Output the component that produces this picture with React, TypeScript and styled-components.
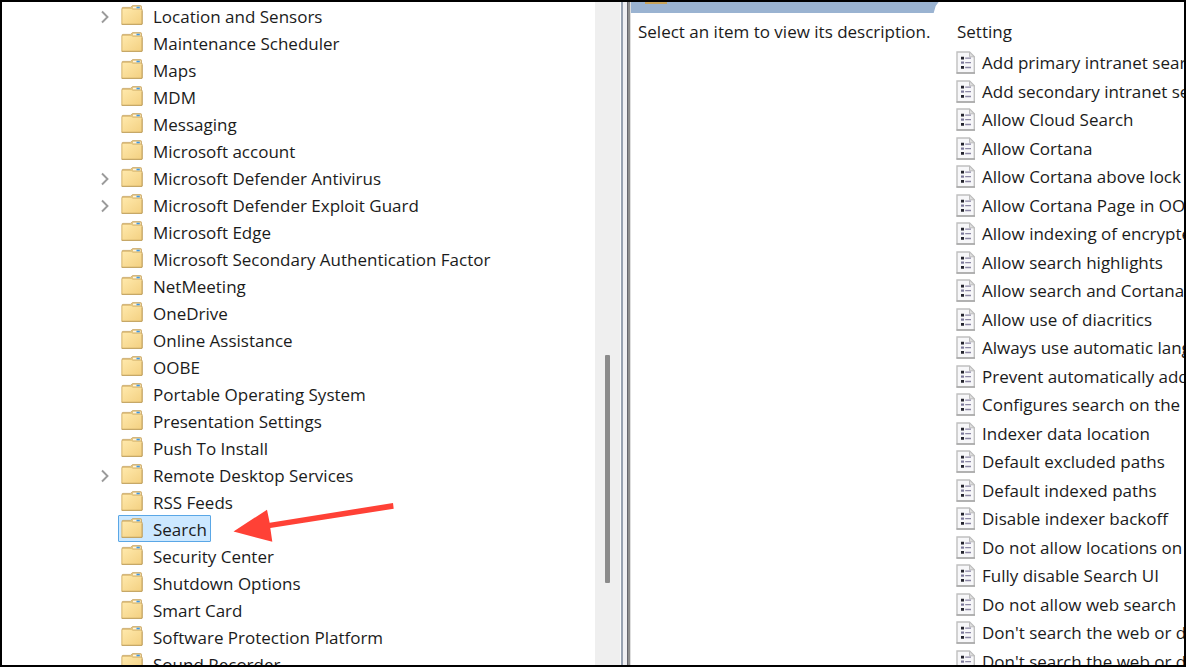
import React from "react";
import styled, { createGlobalStyle } from "styled-components";

const GlobalStyle = createGlobalStyle`
  *, *::before, *::after { box-sizing: border-box; }
  body { margin: 0; background: #fff; }
`;

const Frame = styled.div`
  display: grid;
  grid-template-columns: minmax(0, 593fr) 26px 10px minmax(0, 553fr);
  height: 100vh;
  overflow: hidden;
  border: 2px solid #000;
  background: #fff;
  color: #1b1b1b;
  font-family: "Segoe UI", "Open Sans", sans-serif;
  font-size: 17px;
  line-height: 27px;
`;

const TreePane = styled.nav`
  min-width: 0;
  overflow: hidden;
`;

const Tree = styled.ul`
  list-style: none;
  margin: 0;
  padding: 0 0 0 96px;
`;

const TreeRow = styled.li`
  position: relative;
  display: flex;
  height: 27px;
`;

const Expander = styled.button`
  display: flex;
  align-items: center;
  justify-content: center;
  width: 14px;
  margin: 2px 6px 0 0;
  padding: 0;
  border: 0;
  background: none;
`;

const ExpanderGap = styled.span`
  width: 20px;
`;

const Folder = styled.button<{ $selected: boolean }>`
  display: flex;
  align-items: center;
  gap: 10px;
  height: 27px;
  padding: 0 3px 0 2px;
  border: 1px solid ${(p) => (p.$selected ? "#5aa7e6" : "transparent")};
  border-radius: 1px;
  background: ${(p) => (p.$selected ? "#cce8ff" : "none")};
  color: inherit;
  font: inherit;
  white-space: nowrap;
`;

const FolderLabel = styled.span`
  padding-top: 2px;
`;

const Arrow = styled.svg`
  position: absolute;
  left: 135px;
  top: -15px;
  pointer-events: none;
`;

const ScrollTrack = styled.div`
  display: grid;
  grid-template-rows: 353fr 228fr 82fr;
  justify-content: center;
  border-right: 1px solid #fafafa;
  background: #efefef;
`;

const ScrollThumb = styled.div`
  grid-row: 2;
  width: 5px;
  border-radius: 1px;
  background: #8b8b8b;
`;

const Splitter = styled.div`
  background: linear-gradient(
    to right,
    #98a2b1 2px,
    #f0f0f3 2px 6px,
    #66666e 6px 7px,
    #8e8e8e 7px 9px,
    #dedede 9px
  );
`;

const Details = styled.main`
  min-width: 0;
  overflow: hidden;
`;

const TitleBar = styled.header`
  width: 56%;
  height: 11px;
  padding-left: 14px;
  overflow: hidden;
  background: #9ab3d1;
  clip-path: polygon(0 0, calc(100% - 2px) 0, calc(100% - 5px) 4px, calc(100% - 7px) 100%, 0 100%);
`;

const TitleIcon = styled.div`
  width: 22px;
  height: 2px;
  background: #c9a45a;
`;

const Columns = styled.div`
  display: grid;
  grid-template-columns: minmax(0, 325fr) minmax(0, 228fr);
  padding-top: 5px;
`;

const Description = styled.p`
  margin: 0;
  padding-left: 7px;
  white-space: nowrap;
`;

const Settings = styled.table`
  border-collapse: collapse;
  width: 100%;
  table-layout: fixed;
`;

const SettingHead = styled.th`
  height: 31px;
  padding: 0 0 0 1px;
  font-weight: 400;
  text-align: left;
  vertical-align: top;
`;

const SettingRow = styled.tr`
  height: 29px;
  &:nth-child(even) {
    height: 28px;
  }
`;

const SettingCell = styled.td`
  padding: 0;
  vertical-align: top;
`;

const SettingContent = styled.div`
  display: flex;
  align-items: center;
  gap: 6px;
  overflow: hidden;
  white-space: nowrap;

  svg {
    flex: none;
  }
`;

const FolderIcon = () => (
  <svg width="22" height="21" viewBox="0 0 22 21" aria-hidden="true">
    <defs>
      <linearGradient id="folderFront" x1="0" y1="0" x2="1" y2="1">
        <stop offset="0" stopColor="#ffe9ac" />
        <stop offset="1" stopColor="#f3d081" />
      </linearGradient>
    </defs>
    <path d="M1 3.200Q1 2.400 1.800 2.400H9.500L11 .9Q11.300 .6 12 .6H19.500Q20.500 .6 20.500 1.600V4H21V19H1Z" fill="#e3c47e" stroke="#c6a565" strokeWidth=".8" />
    <path d="M12 1.700H19.500V3.300H12Z" fill="#fdf6e2" />
    <path d="M15.500 1.700H18.800V3.300H15.500Z" fill="#3f97e2" />
    <path d="M1 4H10.500L12 5H20.500Q21.100 5 21.100 5.600V18.600Q21.100 19.200 20.500 19.200H1.500Q.9 19.200 .9 18.600Z" fill="url(#folderFront)" />
    <path d="M1 4V19.200" stroke="#dfc07a" />
    <path d="M.6 19.300H21.100V5.400" stroke="#bd9b56" fill="none" />
  </svg>
);

const ChevronIcon = () => (
  <svg width="10" height="14" viewBox="0 0 10 14" aria-hidden="true">
    <path d="M2 1.500 7.500 7 2 12.500" fill="none" stroke="#9b9b9b" strokeWidth="1.900" />
  </svg>
);

const PolicyIcon = () => (
  <svg width="20" height="23" viewBox="0 0 20 23" aria-hidden="true">
    <path d="M1 1H13.500L18.300 5.800V22H1Z" fill="#f7f7f9" stroke="#c0c0c0" strokeWidth="1.400" />
    <path d="M13.500 1V5.800H18.300Z" fill="#dedede" stroke="#bcbcbc" />
    <path d="M.5 22H19" stroke="#a5a5a5" strokeWidth="1.400" />
    <path d="M5 5.700H8V8.400H5ZM5 15H8V17.700H5Z" fill="#25252f" />
    <path d="M5 10.500H8V12.700H5Z" fill="#7a7798" />
    <path d="M9.200 7.200H15M9.200 11.700H15M9.200 16.500H15" stroke="#8c87a5" strokeWidth="1.300" />
  </svg>
);

const folders = [
  { name: "Location and Sensors", expandable: true },
  { name: "Maintenance Scheduler" },
  { name: "Maps" },
  { name: "MDM" },
  { name: "Messaging" },
  { name: "Microsoft account" },
  { name: "Microsoft Defender Antivirus", expandable: true },
  { name: "Microsoft Defender Exploit Guard", expandable: true },
  { name: "Microsoft Edge" },
  { name: "Microsoft Secondary Authentication Factor" },
  { name: "NetMeeting" },
  { name: "OneDrive" },
  { name: "Online Assistance" },
  { name: "OOBE" },
  { name: "Portable Operating System" },
  { name: "Presentation Settings" },
  { name: "Push To Install" },
  { name: "Remote Desktop Services", expandable: true },
  { name: "RSS Feeds" },
  { name: "Search", selected: true },
  { name: "Security Center" },
  { name: "Shutdown Options" },
  { name: "Smart Card" },
  { name: "Software Protection Platform" },
  { name: "Sound Recorder" },
] as { name: string; expandable?: boolean; selected?: boolean }[];

const settings = [
  "Add primary intranet search location",
  "Add secondary intranet search locations",
  "Allow Cloud Search",
  "Allow Cortana",
  "Allow Cortana above lock screen",
  "Allow Cortana Page in OOBE",
  "Allow indexing of encrypted files",
  "Allow search highlights",
  "Allow search and Cortana to use location",
  "Allow use of diacritics",
  "Always use automatic language detection",
  "Prevent automatically adding shared folders",
  "Configures search on the taskbar",
  "Indexer data location",
  "Default excluded paths",
  "Default indexed paths",
  "Disable indexer backoff",
  "Do not allow locations on removable drives",
  "Fully disable Search UI",
  "Do not allow web search",
  "Don't search the web or display results",
  "Don't search the web or display results over metered connections",
];

export default function App() {
  return (
    <>
      <GlobalStyle />
      <Frame>
        <TreePane aria-label="Policy folders">
          <Tree>
            {folders.map((f) => (
              <TreeRow key={f.name}>
                {f.expandable ? (
                  <Expander aria-label={`Expand ${f.name}`}>
                    <ChevronIcon />
                  </Expander>
                ) : (
                  <ExpanderGap />
                )}
                <Folder $selected={!!f.selected}>
                  <FolderIcon />
                  <FolderLabel>{f.name}</FolderLabel>
                </Folder>
                {f.selected && (
                  <Arrow width="162" height="44" viewBox="0 0 162 44" aria-hidden="true">
                    <path d="M.5 31.500 34 9.700 36.700 22.700 160 3 160.700 8.700 37.300 28 39.300 41.700Z" fill="#ff4136" />
                  </Arrow>
                )}
              </TreeRow>
            ))}
          </Tree>
        </TreePane>
        <ScrollTrack>
          <ScrollThumb />
        </ScrollTrack>
        <Splitter />
        <Details>
          <TitleBar>
            <TitleIcon />
          </TitleBar>
          <Columns>
            <Description>Select an item to view its description.</Description>
            <Settings>
              <thead>
                <tr>
                  <SettingHead scope="col">Setting</SettingHead>
                </tr>
              </thead>
              <tbody>
                {settings.map((name) => (
                  <SettingRow key={name}>
                    <SettingCell>
                      <SettingContent>
                        <PolicyIcon />
                        {name}
                      </SettingContent>
                    </SettingCell>
                  </SettingRow>
                ))}
              </tbody>
            </Settings>
          </Columns>
        </Details>
      </Frame>
    </>
  );
}
